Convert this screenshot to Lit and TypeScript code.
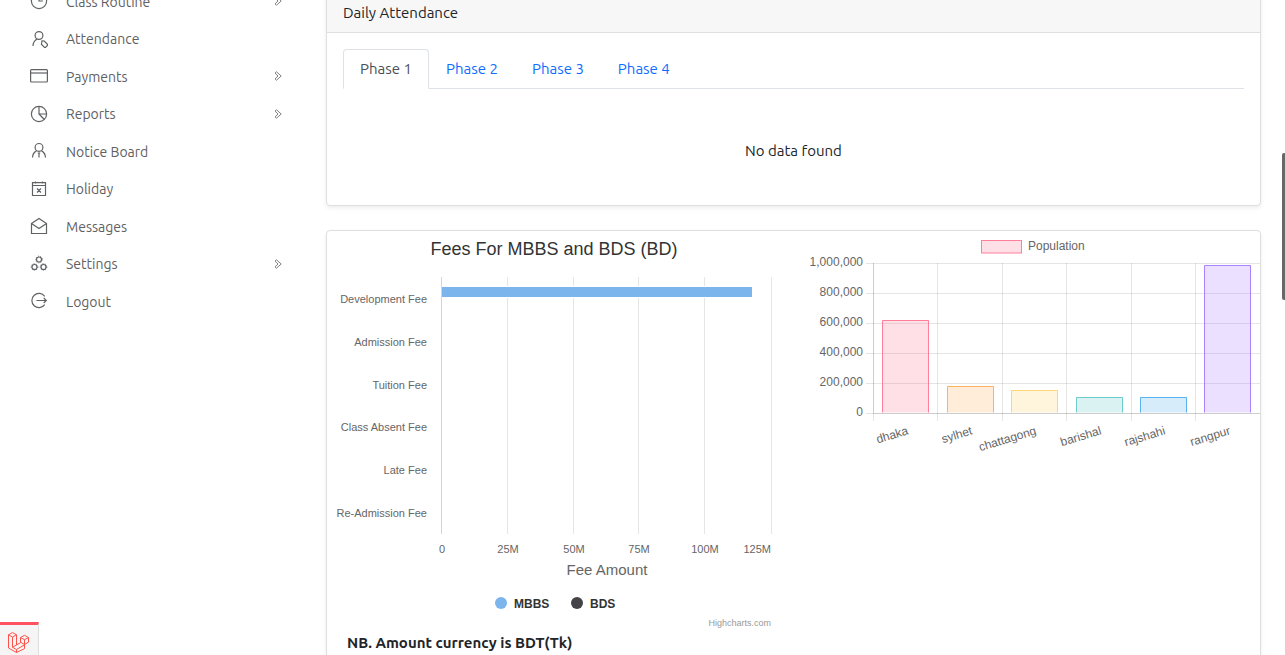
import { LitElement, html, svg, css } from "lit";
import { customElement, state } from "lit/decorators.js";

const icons: Record<string, unknown> = {
  clock: svg`<circle cx="9" cy="9" r="7.6"/><path d="M9 4v5h4"/>`,
  attendance: svg`<circle cx="9" cy="5.500" r="3.900"/><path d="M3 16c.2-3.600 1.700-5.800 4-6.800M12 10.800l2.300.2 3.600 3.900-2.900 2.900-3.600-3.600z"/>`,
  card: svg`<rect x=".6" y="2.600" width="16.800" height="12.400" rx="1"/><path d="M.6 6h16.800"/>`,
  pie: svg`<circle cx="9" cy="9" r="7.600"/><path d="M9 1.400V9h7.600M9 9l5.300 5.500"/>`,
  notice: svg`<circle cx="9" cy="5.400" r="3.900"/><path d="M2.500 15.500c.2-3.500 1.800-5.500 4-6.600M15.500 15.500c-.2-3.500-1.800-5.500-4-6.600M9 10.500v5M7.800 11h2.400"/>`,
  calendar: svg`<path d="M2.500 2.600h13v12.900h-13zM2.500 5.500h13M5.500 1.500v2M12.500 1.500v2M7 8.500l4 4M11 8.500l-4 4"/>`,
  envelope: svg`<path d="M1.500 6.500L9 1.500l7.500 5v10h-15zM1.500 6.500L9 11.500l7.500-5"/>`,
  cogs: svg`<circle cx="9" cy="4.500" r="2.500"/><circle cx="4.500" cy="12" r="2.500"/><circle cx="13.500" cy="12" r="2.500"/><g stroke-width="1" stroke-dasharray="1 1.350"><circle cx="9" cy="4.500" r="3.300"/><circle cx="4.500" cy="12" r="3.300"/><circle cx="13.500" cy="12" r="3.300"/></g>`,
  logout: svg`<path d="M14.700 4.300a7.100 7.100 0 1 0 0 8.400M6.500 8.500h9.700M13.700 6l2.600 2.500-2.600 2.500"/>`,
};

const menu = [
  { label: "Class Routine", icon: "clock", more: true },
  { label: "Attendance", icon: "attendance", more: false },
  { label: "Payments", icon: "card", more: true },
  { label: "Reports", icon: "pie", more: true },
  { label: "Notice Board", icon: "notice", more: false },
  { label: "Holiday", icon: "calendar", more: false },
  { label: "Messages", icon: "envelope", more: false },
  { label: "Settings", icon: "cogs", more: true },
  { label: "Logout", icon: "logout", more: false },
];

@customElement("side-menu")
class SideMenu extends LitElement {
  static styles = css`
    :host { display: block; }
    ul { list-style: none; margin: 0; padding: 0; display: grid; gap: 15px; }
    li { font-size: 15px; line-height: 1.5; height: 1.5em; }
    a { display: flex; align-items: center; height: 100%; color: #5f6163; text-decoration: none; }
    .icon { width: 18px; height: 18px; margin: 0 18px 2px 0; flex: none; }
    .label { flex: 1; font-size: 14px; }
    .more { width: 8px; height: 10px; margin-bottom: 2px; }
    svg { fill: none; stroke: currentColor; stroke-width: 1.2; }
    .more { stroke-width: 0.8; }
  `;
  render() {
    return html`<nav aria-label="Main"><ul>
      ${menu.map((m) => html`<li><a href="#">
        <svg class="icon" viewBox="0 0 18 18" aria-hidden="true">${icons[m.icon]}</svg>
        <span class="label">${m.label}</span>
        ${m.more ? html`<svg class="more" viewBox="0 0 8 10" aria-hidden="true"><path d="M2.500.8L7.200 5 2.500 9.200 1 7.900 4 5 1 2.100z"/></svg>` : ""}
      </a></li>`)}
    </ul></nav>`;
  }
}

const fees = ["Development Fee", "Admission Fee", "Tuition Fee", "Class Absent Fee", "Late Fee", "Re-Admission Fee"];
const feeRows = [72, 115, 158, 200, 243, 286];
const feeGrid = [180, 246, 311, 377, 444];
const feeTicks = [[115, "0"], [181, "25M"], [247, "50M"], [312, "75M"], [378, "100M"]];

@customElement("fee-chart")
class FeeChart extends LitElement {
  static styles = css`
    :host { display: block; }
    svg { display: block; width: 100%; font-family: "Liberation Sans", Arial, sans-serif; }
    .title { font-size: 18px; fill: #333; text-anchor: middle; }
    .cat { font-size: 11px; fill: #666; text-anchor: end; }
    .tick { font-size: 11px; fill: #666; text-anchor: middle; }
    .axis { font-size: 15px; fill: #666; text-anchor: middle; }
    .legend { font-size: 12px; font-weight: bold; fill: #333; }
    .credit { font-size: 9px; fill: #999; text-anchor: end; }
  `;
  render() {
    return html`<svg viewBox="0 0 455 400" role="img" aria-label="Fees For MBBS and BDS (BD)">
      <text class="title" x="227" y="24">Fees For MBBS and BDS (BD)</text>
      ${feeGrid.map((x) => svg`<rect x=${x} y="46" width="1" height="257" fill="#e6e6e6"/>`)}
      <rect x="114" y="46" width="1" height="257" fill="#ccd6eb"/>
      <rect x="115" y="55" width="311" height="12" fill="#fff"/>
      <rect x="115" y="56" width="310" height="10" fill="#7cb5ec"/>
      ${fees.map((f, i) => svg`<text class="cat" x="100" y=${feeRows[i]}>${f}</text>`)}
      ${feeTicks.map(([x, t]) => svg`<text class="tick" x=${x} y="322">${t}</text>`)}
      <text class="cat" x="444" y="322">125M</text>
      <text class="axis" x="280" y="344">Fee Amount</text>
      <circle cx="174" cy="372" r="6" fill="#7cb5ec"/><text class="legend" x="187" y="377">MBBS</text>
      <circle cx="250" cy="372" r="6" fill="#434348"/><text class="legend" x="263" y="377">BDS</text>
      <text class="credit" x="444" y="395">Highcharts.com</text>
    </svg>`;
  }
}

const regions = [
  { name: "dhaka", x: 77.5, top: 89.5, rgb: "255,99,132", end: 104 },
  { name: "sylhet", x: 142.5, top: 155.5, rgb: "255,159,64", end: 168 },
  { name: "chattagong", x: 206.5, top: 159.5, rgb: "255,205,86", end: 232 },
  { name: "barishal", x: 271.5, top: 166.5, rgb: "75,192,192", end: 297 },
  { name: "rajshahi", x: 335.5, top: 166.5, rgb: "54,162,235", end: 361 },
  { name: "rangpur", x: 399.5, top: 34.5, rgb: "153,102,255", end: 426 },
];
const popTicks = ["1,000,000", "800,000", "600,000", "400,000", "200,000", "0"];
const popCols = [68, 132, 197, 261, 326, 390];

@customElement("population-chart")
class PopulationChart extends LitElement {
  static styles = css`
    :host { display: block; }
    svg { display: block; width: 100%; overflow: visible; font-family: "Liberation Sans", Arial, sans-serif; }
    text { font-size: 12px; fill: #666; }
    .end { text-anchor: end; }
    .grid { fill: rgba(0, 0, 0, 0.1); }
  `;
  render() {
    return html`<svg viewBox="0 0 455 228" role="img" aria-label="Population">
      <rect x="176.500" y="9.500" width="40" height="12.500" fill="rgba(255,99,132,.2)" stroke="rgba(255,99,132,.8)"/>
      <text x="223" y="19">Population</text>
      ${popTicks.map((t, i) => svg`<text class="end" x="58" y=${35 + i * 30}>${t}</text>
        <rect class="grid" x="61" y=${32 + i * 30} width="394" height="1"/>`)}
      ${popCols.map((x) => svg`<rect class="grid" x=${x} y="32" width="1" height="158"/>`)}
      <rect class="grid" x="68" y="32" width="1" height="150"/>
      <rect class="grid" x="68" y="182" width="387" height="1"/>
      ${regions.map((r) => svg`
        <path d="M${r.x} 181.500V${r.top}h46V181.500" fill="rgba(${r.rgb},.2)" stroke="rgba(${r.rgb},.8)"/>
        <text class="end" transform="translate(${r.end} 203) rotate(-17)">${r.name}</text>`)}
    </svg>`;
  }
}

@customElement("app-root")
class AppRoot extends LitElement {
  static styles = css`
    :host { display: block; height: 100vh; overflow: hidden; position: relative; background: #fff; color: #212529;
      font-family: Ubuntu, "Noto Sans", sans-serif; font-size: 15px; line-height: 22px; }
    * { box-sizing: border-box; }
    .page { display: grid; grid-template-columns: 302px minmax(0, 1fr); }
    .side { padding: 0 20px 0 30px; margin-top: -9px; }
    .main { padding: 0 24px; margin-top: -9px; display: grid; gap: 24px; }
    .card { border: 1px solid #dfdfdf; border-radius: 4px; background: #fff; box-shadow: 0 2px 4px rgba(0, 0, 0, 0.075); }
    .head { margin: 0; padding: 10px 16px 8px; font: inherit; background: #f7f7f7; border-bottom: 1px solid #dfdfdf; }
    .body { padding: 16px; }
    .tabs { display: flex; border-bottom: 1px solid #dee2e6; }
    .tab { font: inherit; flex: none; padding: 8px 16px; margin-bottom: -1px; color: #0d6efd; background: none;
      border: 1px solid transparent; border-radius: 4px 4px 0 0; cursor: pointer; }
    .tab.on { color: #495057; background: #fff; border-color: #dee2e6 #dee2e6 #fff; }
    .empty { margin: 0; padding: 51px 0 27px; text-align: center; }
    .charts { display: grid; grid-template-columns: 1fr 1fr; gap: 23px; }
    .note { margin: 0; padding: 1px 20px 24px; font-weight: 700; }
    .debug { position: absolute; left: 0; bottom: 0; width: 39px; height: 33px; padding: 5px 0 0 8px; border: 0; border-top: 3px solid #ff5160;
      border-right: 1px solid #ddd; background: #f5f5f5; }
    .debug svg { display: block; width: 21px; height: 21px; fill: none; stroke: #ff5148; stroke-width: 1; stroke-linejoin: round; }
    .thumb { position: absolute; right: 0; top: 153px; width: 3px; height: 147px; border-radius: 2px 0 0 2px; background: #686868; }
  `;
  @state() phase = 1;
  render() {
    return html`
      <div class="page">
        <side-menu class="side"></side-menu>
        <main class="main">
          <section class="card">
            <h2 class="head">Daily Attendance</h2>
            <div class="body">
              <div class="tabs" role="tablist">
                ${[1, 2, 3, 4].map((n) => html`<button role="tab" aria-selected=${n === this.phase ? "true" : "false"}
                  class=${n === this.phase ? "tab on" : "tab"} @click=${() => (this.phase = n)}>Phase ${n}</button>`)}
              </div>
              <p class="empty">No data found</p>
            </div>
          </section>
          <section class="card">
            <div class="charts">
              <div><fee-chart></fee-chart><p class="note">NB. Amount currency is BDT(Tk)</p></div>
              <population-chart></population-chart>
            </div>
          </section>
        </main>
      </div>
      <button class="debug" aria-label="Debug bar"><svg viewBox="0 0 21 21" aria-hidden="true">
        <path d="M.5 2.800L4.500.6l4 2.200v10.200l4-2.300V5.500l4-2.200 4 2.200v4.700l-4 2.300v4.200L8.500 20.500.5 16zM.5 2.800l4 2.200 4-2.200M4.500 5v10.300l4 2.200 8-4.700M8.500 13l-4 2.300M8.500 17.500v3M12.500 5.500l4 2.200 4-2.200M16.500 7.700v4.800M12.500 10.200l4 2.300"/>
      </svg></button>
      <div class="thumb"></div>`;
  }
}
